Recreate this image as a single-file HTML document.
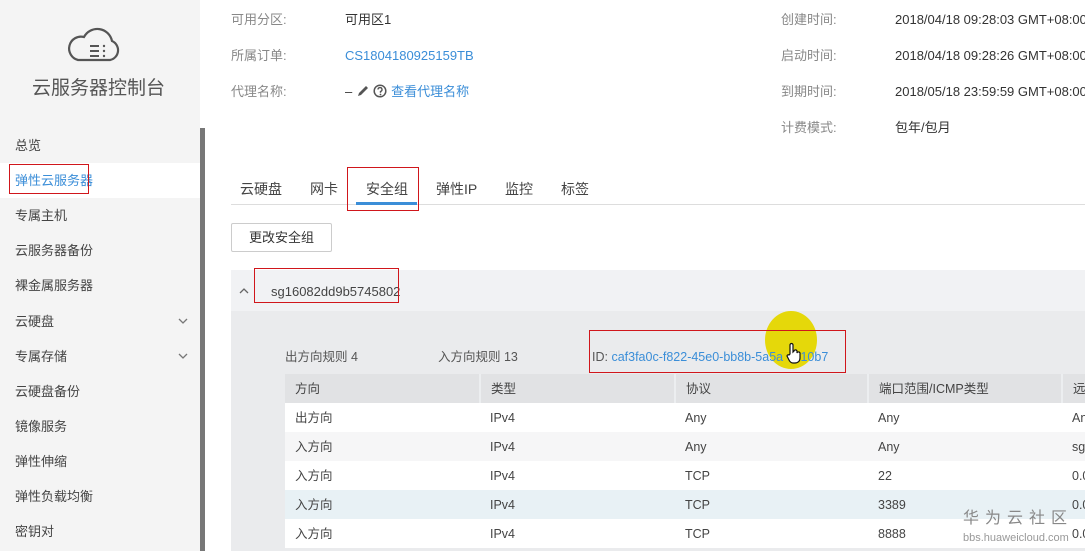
<!DOCTYPE html>
<html><head><meta charset="utf-8"><style>
*{margin:0;padding:0;box-sizing:border-box}
body{width:1085px;height:551px;overflow:hidden;background:#fff;font-family:"Liberation Sans","Noto Sans CJK SC",sans-serif;font-size:13px;color:#333;position:relative}
.a{position:absolute;white-space:nowrap;line-height:16px}
.side{position:absolute;left:0;top:0;width:200px;height:551px;background:#f4f4f4}
.nav{position:absolute;left:15px;font-size:13px;color:#444;line-height:16px}
.lbl{color:#888}
.blue{color:#3b8ed8}
.red{position:absolute;border:1px solid #d0161b}
td,th{height:29px;padding:0 0 0 10px;text-align:left;font-weight:normal;font-size:12.5px;color:#444;line-height:16px;vertical-align:middle}
th{background:#e1e2e4;border-right:2px solid #eceef0}
</style></head><body>
<div class="side"></div>
<div class="a" style="left:200px;top:128px;width:5px;height:423px;background:#777"></div>
<svg class="a" style="left:64px;top:25px" width="60" height="40" viewBox="0 0 60 40"><path d="M14 35 H46 A10 10 0 0 0 48 16 A15 15 0 0 0 20 12 A11 11 0 0 0 14 35 Z" fill="none" stroke="#555" stroke-width="2.2"/><path d="M26 21h9M26 26h9M26 31h9" stroke="#555" stroke-width="2"/><circle cx="40" cy="21" r="1.2" fill="#555"/><circle cx="40" cy="26" r="1.2" fill="#555"/><circle cx="40" cy="31" r="1.2" fill="#555"/></svg>
<div class="a" style="left:32px;top:78px;font-size:19px;line-height:22px;color:#555">云服务器控制台</div>
<div class="nav" style="top:138px">总览</div>
<div class="a" style="left:0;top:163px;width:200px;height:35px;background:#fff"></div>
<div class="nav" style="top:173px;color:#3b8ed8">弹性云服务器</div>
<div class="red" style="left:9px;top:164px;width:80px;height:30px"></div>
<div class="nav" style="top:208px">专属主机</div>
<div class="nav" style="top:243px">云服务器备份</div>
<div class="nav" style="top:278px">裸金属服务器</div>
<div class="nav" style="top:314px">云硬盘</div>
<div class="nav" style="top:349px">专属存储</div>
<div class="nav" style="top:384px">云硬盘备份</div>
<div class="nav" style="top:419px">镜像服务</div>
<div class="nav" style="top:454px">弹性伸缩</div>
<div class="nav" style="top:489px">弹性负载均衡</div>
<div class="nav" style="top:524px">密钥对</div>
<svg class="a" style="left:178px;top:318px" width="10" height="7"><path d="M1 1l4 4 4-4" fill="none" stroke="#777" stroke-width="1.3"/></svg>
<svg class="a" style="left:178px;top:353px" width="10" height="7"><path d="M1 1l4 4 4-4" fill="none" stroke="#777" stroke-width="1.3"/></svg>

<div class="a lbl" style="left:231px;top:12px">可用分区:</div>
<div class="a" style="left:345px;top:12px">可用区1</div>
<div class="a lbl" style="left:231px;top:48px">所属订单:</div>
<div class="a blue" style="left:345px;top:48px">CS1804180925159TB</div>
<div class="a lbl" style="left:231px;top:84px">代理名称:</div>
<div class="a" style="left:345px;top:84px">– <svg width="14" height="14" style="vertical-align:-2px"><path d="M2 12l1-3 7-7 2 2-7 7z" fill="#555"/></svg> <svg width="14" height="14" style="vertical-align:-2px"><circle cx="7" cy="7" r="5.8" fill="none" stroke="#555" stroke-width="1.5"/><path d="M5 5.5a2 2 0 1 1 2.5 2v1.2" fill="none" stroke="#555" stroke-width="1.4"/><circle cx="7.5" cy="10.5" r=".9" fill="#555"/></svg> <span class="blue">查看代理名称</span></div>
<div class="a lbl" style="left:781px;top:12px">创建时间:</div>
<div class="a" style="left:895px;top:12px">2018/04/18 09:28:03 GMT+08:00</div>
<div class="a lbl" style="left:781px;top:48px">启动时间:</div>
<div class="a" style="left:895px;top:48px">2018/04/18 09:28:26 GMT+08:00</div>
<div class="a lbl" style="left:781px;top:84px">到期时间:</div>
<div class="a" style="left:895px;top:84px">2018/05/18 23:59:59 GMT+08:00</div>
<div class="a lbl" style="left:781px;top:120px">计费模式:</div>
<div class="a" style="left:895px;top:120px">包年/包月</div>

<div class="a" style="left:231px;top:204px;width:854px;height:1px;background:#ddd"></div>
<div class="a" style="left:240px;top:181px;font-size:14px;color:#444">云硬盘</div>
<div class="a" style="left:310px;top:181px;font-size:14px;color:#444">网卡</div>
<div class="a" style="left:366px;top:181px;font-size:14px;color:#444">安全组</div>
<div class="a" style="left:356px;top:202px;width:61px;height:3px;background:#3b8ed8"></div>
<div class="red" style="left:347px;top:167px;width:72px;height:44px"></div>
<div class="a" style="left:436px;top:181px;font-size:14px;color:#444">弹性IP</div>
<div class="a" style="left:505px;top:181px;font-size:14px;color:#444">监控</div>
<div class="a" style="left:561px;top:181px;font-size:14px;color:#444">标签</div>
<div class="a" style="left:231px;top:223px;width:101px;height:29px;border:1px solid #ccc;border-radius:2px;text-align:center;line-height:27px;font-size:13px">更改安全组</div>

<div class="a" style="left:231px;top:270px;width:854px;height:41px;background:#f1f2f4"></div>
<div class="a" style="left:231px;top:311px;width:854px;height:240px;background:#eaebed"></div>
<svg class="a" style="left:239px;top:287px" width="10" height="7"><path d="M1 6l4-4 4 4" fill="none" stroke="#666" stroke-width="1.3"/></svg>
<div class="a" style="left:271px;top:284px;color:#444">sg16082dd9b5745802</div>
<div class="red" style="left:254px;top:268px;width:145px;height:35px"></div>
<div class="a" style="left:285px;top:349px;color:#555;font-size:12.5px">出方向规则 4</div>
<div class="a" style="left:438px;top:349px;color:#555;font-size:12.5px">入方向规则 13</div>
<div class="a" style="left:765px;top:311px;width:52px;height:58px;border-radius:50%;background:#e5d80a"></div>
<div class="a" style="left:592px;top:349px;color:#555;font-size:12.5px">ID: <span class="blue">caf3fa0c-f822-45e0-bb8b-5a5a&#160;&#160;&#160;710b7</span></div>
<svg class="a" style="left:785px;top:342px" width="16" height="22"><path d="M5 12V3a1.5 1.5 0 0 1 3 0v7l1-1a1.5 1.5 0 0 1 3 1v1a1.5 1.5 0 0 1 3 1v4c0 3-2 5-5 5H8c-2 0-3-1-4-3l-2-4a1.3 1.3 0 0 1 2-1z" fill="#fff" stroke="#111" stroke-width="1.2"/></svg>
<div class="red" style="left:589px;top:330px;width:257px;height:43px"></div>

<table class="a" style="left:285px;top:374px;border-collapse:collapse;width:810px">
<tr><th style="width:195px">方向</th><th style="width:195px">类型</th><th style="width:193px">协议</th><th style="width:194px">端口范围/ICMP类型</th><th>远</th></tr>
<tr style="background:#fff"><td>出方向</td><td>IPv4</td><td>Any</td><td>Any</td><td>An</td></tr>
<tr style="background:#f6f6f7"><td>入方向</td><td>IPv4</td><td>Any</td><td>Any</td><td>sg</td></tr>
<tr style="background:#fff"><td>入方向</td><td>IPv4</td><td>TCP</td><td>22</td><td>0.0</td></tr>
<tr style="background:#e8f1f5"><td>入方向</td><td>IPv4</td><td>TCP</td><td>3389</td><td>0.0</td></tr>
<tr style="background:#fff"><td>入方向</td><td>IPv4</td><td>TCP</td><td>8888</td><td>0.0</td></tr>
</table>
<div class="a" style="left:963px;top:511px;font-size:16px;color:#888;letter-spacing:6px">华为云社区</div>
<div class="a" style="left:963px;top:530px;font-size:11px;color:#999">bbs.huaweicloud.com</div>
</body></html>
